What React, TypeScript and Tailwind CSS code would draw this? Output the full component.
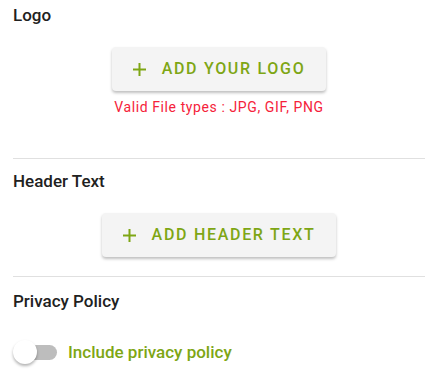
import React from 'react';

const PlusIcon = () => (
  <svg width="13" height="13" viewBox="0 0 13 13" className="shrink-0">
    <path d="M6.5 0v13M0 6.5h13" stroke="currentColor" strokeWidth="2" />
  </svg>
);

function AddButton({ label, width }: { label: string; width: string }) {
  return (
    <button
      className={`${width} h-[44px] flex items-center justify-center gap-[16px] rounded-[4px] bg-[#f4f4f4] text-[#7ea614] text-[16px] font-medium tracking-[1.7px] uppercase shadow-[0_2px_3px_rgba(0,0,0,0.25)]`}
    >
      <PlusIcon />
      <span>{label}</span>
    </button>
  );
}

export default function App() {
  return (
    <div className="w-[442px] h-[372px] bg-white overflow-hidden pl-[13px] pr-[17px] font-['Roboto',sans-serif]">
      {/* Logo */}
      <div className="pt-[3px] text-[17px] leading-[24px] font-medium text-[#212121]">Logo</div>
      <div className="flex flex-col items-center mt-[20px]">
        <AddButton label="Add your logo" width="w-[214px]" />
        <p className="mt-[7px] text-[14px] leading-[18px] tracking-[0.6px] text-[#f5223a]">
          Valid File types : JPG, GIF, PNG
        </p>
      </div>
      <div className="mt-[42px] border-t border-[#e0e0e0]" />

      {/* Header text */}
      <div className="mt-[10px] text-[17px] leading-[24px] font-medium text-[#212121]">Header Text</div>
      <div className="flex justify-center mt-[20px]">
        <AddButton label="Add header text" width="w-[234px]" />
      </div>
      <div className="mt-[19px] border-t border-[#e0e0e0]" />

      {/* Privacy policy */}
      <div className="mt-[12px] text-[17px] leading-[24px] font-medium text-[#212121]">Privacy Policy</div>
      <label className="mt-[27px] flex items-center gap-[11px]">
        <span className="relative w-[44px] h-[24px] flex items-center shrink-0">
          <span className="ml-[8px] w-[36px] h-[15px] rounded-full bg-[#bdbdbd]" />
          <span className="absolute left-0 top-0 w-[24px] h-[24px] rounded-full bg-white shadow-[0_2px_3px_rgba(0,0,0,0.3)]" />
        </span>
        <span className="text-[17px] leading-[24px] font-medium text-[#7ea614]">Include privacy policy</span>
      </label>
    </div>
  );
}
